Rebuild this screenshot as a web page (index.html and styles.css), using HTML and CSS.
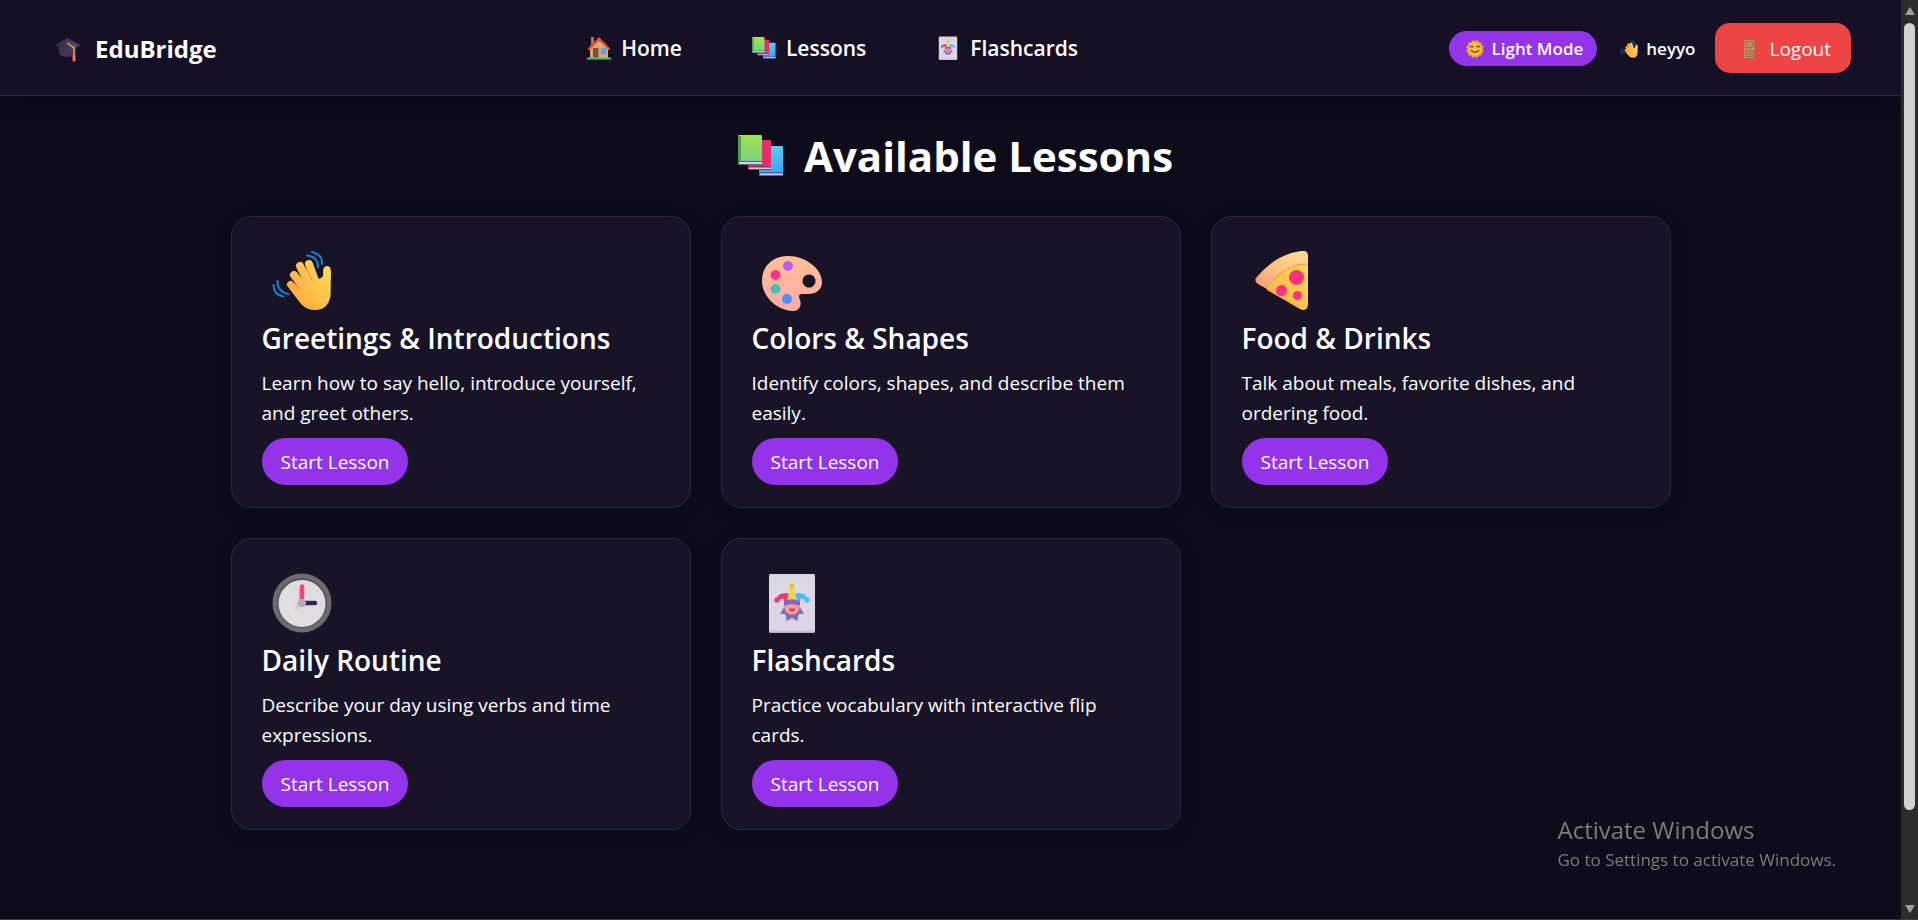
FILE: index.html
```html
<!DOCTYPE html>
<html lang="en">
<head>
<meta charset="utf-8">
<title>EduBridge - Lessons</title>
<link rel="stylesheet" href="styles.css">
</head>
<body>
<svg class="sprite" aria-hidden="true">
  <defs>
    <linearGradient id="g-hand" x1="0" y1="1" x2="1" y2="0"><stop offset="0" stop-color="#ff9a55"/><stop offset=".35" stop-color="#ffb940"/><stop offset="1" stop-color="#ffdc58"/></linearGradient>
    <linearGradient id="g-finger" gradientUnits="userSpaceOnUse" x1="18" y1="38" x2="42" y2="14"><stop offset="0" stop-color="#fba94c"/><stop offset="1" stop-color="#ffd052"/></linearGradient>
    <linearGradient id="g-green" x1="0" y1="0" x2="0" y2="1"><stop offset="0" stop-color="#a5e052"/><stop offset="1" stop-color="#72d083"/></linearGradient>
    <linearGradient id="g-blue" x1="0" y1="0" x2="0" y2="1"><stop offset="0" stop-color="#55cdf5"/><stop offset="1" stop-color="#37a0f0"/></linearGradient>
    <linearGradient id="g-palette" x1="0" y1="0" x2="0" y2="1"><stop offset="0" stop-color="#ffbf96"/><stop offset="1" stop-color="#ffabaa"/></linearGradient>
    <linearGradient id="g-crust" x1="0" y1="1" x2="1" y2="0"><stop offset="0" stop-color="#e8967c"/><stop offset=".4" stop-color="#ffc080"/><stop offset="1" stop-color="#ffdc94"/></linearGradient>
    <linearGradient id="g-cheese" x1="0" y1="1" x2="1" y2="0"><stop offset="0" stop-color="#f9ae48"/><stop offset="1" stop-color="#ffdb50"/></linearGradient>
    <linearGradient id="g-card" x1="0" y1="0" x2="0" y2="1"><stop offset="0" stop-color="#d8d6da"/><stop offset=".2" stop-color="#dcd8e4"/><stop offset=".95" stop-color="#dcd4e5"/><stop offset="1" stop-color="#b9a4cb"/></linearGradient>
    <linearGradient id="g-cap" x1="0" y1="0" x2="1" y2="0"><stop offset="0" stop-color="#2d2932"/><stop offset="1" stop-color="#5a4a72"/></linearGradient>
  </defs>
  <symbol id="i-wave" viewBox="0 0 60 60">
    <g fill="none" stroke="#1c7fd0" stroke-width="2" stroke-linecap="round"><path d="M40 1q11 3 10 12M35 4.500q11 1 11 12M5.500 30q0 11 11 13M1.500 34q0 10 10 11.500"/></g>
    <g fill="none" stroke-linecap="round">
      <path stroke="url(#g-finger)" stroke-width="8" d="M37 13l8 22"/>
      <path stroke="#d98a30" stroke-width="8" d="M31 20l10 18"/>
      <path stroke="url(#g-finger)" stroke-width="8" d="M28 15l11 22"/>
      <path stroke="#d98a30" stroke-width="7" d="M25 29l10 12"/>
      <path stroke="url(#g-finger)" stroke-width="8" d="M22 24l13 16"/>
      <path stroke="#d98a30" stroke-width="6" d="M22 36l9 9"/>
      <path stroke="url(#g-finger)" stroke-width="7" d="M18.500 33.500L32 47"/>
    </g>
    <path fill="url(#g-hand)" d="M16 36l8 6q5-1 8-5 4-3 7-7l7-2 3-1q3-2 2-6 0-6 4-6 4 0 4 6l-.5 24Q56 59 43 59q-8 0-14-6z"/>
  </symbol>
  <symbol id="i-palette" viewBox="0 0 60 60">
    <path fill="url(#g-palette)" fill-rule="evenodd" d="M26 5C44 5 60 18 60 31c0 8-6 12-14 12h-6c-4 0-3 3-2 6 2 6-1 11-7 11C16 60 0 46 0 30 0 15 11 5 26 5zm21 18.500a6.500 6.500 0 1 0 .01 0z"/>
    <circle cx="26" cy="15" r="5" fill="#bc5cf5"/><circle cx="13.500" cy="24" r="5" fill="#f83290"/><circle cx="13.500" cy="38" r="5" fill="#46bdb5"/><circle cx="25" cy="48" r="5" fill="#4a90fa"/>
  </symbol>
  <symbol id="i-pizza" viewBox="0 0 60 60">
    <path fill="url(#g-cheese)" d="M12 36Q29 11 56 11v43q-1 7-8 4z"/>
    <path fill="none" stroke="#f9a850" stroke-width="2" d="M15 38l34 19.500"/>
    <path fill="url(#g-crust)" d="M4 27Q24 3 49 0q7-1 7 5v8Q31 13 15 38L6 33q-4-3-2-6z"/>
    <path fill="none" stroke="#f5a85c" stroke-width="1.500" d="M15 37.500Q31 13 56 13"/>
    <g fill="#f8327f"><circle cx="44.500" cy="26.500" r="7.500"/><circle cx="29.500" cy="39.500" r="5.500"/><circle cx="45.500" cy="44.500" r="4.500"/></g>
  </symbol>
  <symbol id="i-clock" viewBox="0 0 60 60">
    <circle cx="30" cy="30" r="29.500" fill="#6d6a70"/><circle cx="30" cy="30" r="25" fill="#57545c"/><circle cx="30" cy="30.500" r="23.500" fill="#dfdce2"/>
    <path stroke="#d3d0d8" stroke-width="5" stroke-linecap="round" d="M28 18v14l-3 3"/>
    <path stroke="#f74369" stroke-width="4.500" stroke-linecap="round" d="M30 13.500V28"/><path stroke="#342454" stroke-width="4.500" stroke-linecap="round" d="M32 30h11"/>
    <circle cx="30" cy="30" r="4" fill="#b2aeb8"/>
  </symbol>
  <symbol id="i-joker" viewBox="0 0 60 60">
    <rect x="7" y="1" width="46" height="59" rx="1.500" fill="url(#g-card)"/>
    <path fill="#806cba" d="M22 34L18 41h5l2 7 5-3 5 3 2-7h5l-4-7z"/>
    <path fill="#e93c6c" d="M14 26q2-6 10-6l3 1-2 7h-3q0-4-4-1z"/><circle cx="15" cy="27" r="2.700" fill="#e93c6c"/>
    <path fill="#4dbcf5" d="M46 26q-2-6-10-6l-3 1 2 7h3q0-4 4-1z"/><circle cx="45" cy="27" r="2.700" fill="#4dbcf5"/>
    <path fill="#f2d447" d="M28.500 15h3l3 12h-9z"/><circle cx="30" cy="13" r="2.700" fill="#edc53c"/>
    <ellipse cx="30" cy="35" rx="7.500" ry="6.500" fill="#ee9f98"/><path fill="#8565bd" d="M22 28q8-3.500 16 0v5q-8-4-16 0z"/><path fill="#e93c5c" d="M27 35.500h6q0 3-3 3t-3-3z"/>
  </symbol>
  <symbol id="i-books" viewBox="0 0 46 42">
    <rect x="21" y="11" width="24" height="30" rx="1" fill="url(#g-blue)"/><path fill="#3c69c8" d="M21 37h24v4H21z"/><path fill="#d5c5ea" d="M22 38.500h23v1.500H22z"/>
    <rect x="10" y="5" width="23" height="30" rx="1" fill="#e3306a"/><path fill="#b02764" d="M10 31h23v4H10z"/><path fill="#e5c0dc" d="M11 32.500h22V34H11z"/>
    <rect width="24" height="30" rx="1" fill="url(#g-green)"/><path fill="#4f9c55" d="M0 1h3v29H0z"/><path fill="#3d7866" d="M0 26h24v4H0z"/><path fill="#dccbed" d="M1 27h23v2H1z"/>
  </symbol>
  <symbol id="i-cap" viewBox="0 0 25 25">
    <path fill="#433063" d="M3 9h19l-2 9q-8 4-15 0z"/><path fill="url(#g-cap)" d="M12 1l13 7-13 8L0 8z"/>
    <path fill="none" stroke="#eba44a" stroke-width="1.500" d="M12 6l7 5v8"/><path stroke="#f7785a" stroke-width="3" stroke-linecap="round" d="M19 19v4"/>
  </symbol>
  <symbol id="i-house" viewBox="0 0 24 24">
    <path fill="#ac7452" d="M4 1h3v9H4z"/><path fill="#e2a477" d="M12 4l9 9v9H3v-9z"/><path fill="none" stroke="#e94f3c" stroke-width="2.200" stroke-linecap="round" stroke-linejoin="round" d="M2 13L12 2.500 22 13"/>
    <path fill="#825049" d="M6 12h5.500v10H6z"/><path fill="#37b5f3" d="M14 12h5v6h-5z"/><path fill="#39cc68" d="M0 21.500h24V23.500H0z"/>
  </symbol>
  <symbol id="i-sun" viewBox="0 0 24 24">
    <g fill="#f49a35"><rect x="3" y="3" width="18" height="18" rx="2"/><rect x="3" y="3" width="18" height="18" rx="2" transform="rotate(30 12 12)"/><rect x="3" y="3" width="18" height="18" rx="2" transform="rotate(60 12 12)"/></g>
    <circle cx="12" cy="12" r="9" fill="#fbc43e"/><path fill="none" stroke="#6b3b29" stroke-width="1.600" stroke-linecap="round" d="M5.500 9.500q2-2.500 4 0M14.500 9.500q2-2.500 4 0M7 14q5 5 10 0"/>
  </symbol>
  <symbol id="i-door" viewBox="0 0 20 20">
    <path fill="#c78763" d="M4 0h12v20H4z"/><path fill="none" stroke="#a96b4c" d="M4.500 .5h11v19h-11zM6.500 2.500h7v6h-7zM6.500 11.500h7v2h-7zM6.500 15.500h7v2h-7z"/><circle cx="14.500" cy="9.500" r="1" fill="#f9b050"/>
  </symbol>
</svg>
<div class="window">
  <div class="page">
    <header class="navbar">
      <a class="brand" href="#"><svg class="icon-lg"><use href="#i-cap"/></svg>EduBridge</a>
      <nav class="links">
        <a href="#"><svg class="icon-md"><use href="#i-house"/></svg>Home</a>
        <a href="#"><svg class="icon-md"><use href="#i-books"/></svg>Lessons</a>
        <a href="#"><svg class="icon-md"><use href="#i-joker"/></svg>Flashcards</a>
      </nav>
      <div class="account">
        <button class="theme" type="button"><svg class="icon-sm"><use href="#i-sun"/></svg>Light Mode</button>
        <span class="user"><svg class="icon-sm"><use href="#i-wave"/></svg>heyyo</span>
        <button class="logout" type="button"><svg class="icon-door"><use href="#i-door"/></svg>Logout</button>
      </div>
    </header>
    <main class="lessons">
      <h1><svg class="icon-title"><use href="#i-books"/></svg>Available Lessons</h1>
      <div class="grid">
        <article class="card"><svg class="picture"><use href="#i-wave"/></svg><h2>Greetings &amp; Introductions</h2><p>Learn how to say hello, introduce yourself, and greet others.</p><button type="button">Start Lesson</button></article>
        <article class="card"><svg class="picture"><use href="#i-palette"/></svg><h2>Colors &amp; Shapes</h2><p>Identify colors, shapes, and describe them easily.</p><button type="button">Start Lesson</button></article>
        <article class="card"><svg class="picture"><use href="#i-pizza"/></svg><h2>Food &amp; Drinks</h2><p>Talk about meals, favorite dishes, and ordering food.</p><button type="button">Start Lesson</button></article>
        <article class="card"><svg class="picture"><use href="#i-clock"/></svg><h2>Daily Routine</h2><p>Describe your day using verbs and time expressions.</p><button type="button">Start Lesson</button></article>
        <article class="card"><svg class="picture"><use href="#i-joker"/></svg><h2>Flashcards</h2><p>Practice vocabulary with interactive flip cards.</p><button type="button">Start Lesson</button></article>
      </div>
    </main>
  </div>
  <div class="scrollbar" aria-hidden="true">
    <svg class="arrow" viewBox="0 0 12 10"><path d="M6 1l5 8H1z"/></svg>
    <div class="track"><div class="thumb"></div></div>
    <svg class="arrow" viewBox="0 0 12 10"><path d="M6 9l5-8H1z"/></svg>
  </div>
</div>
<aside class="watermark"><strong>Activate Windows</strong><span>Go to Settings to activate Windows.</span></aside>
</body>
</html>
```
FILE: styles.css
```css
* { box-sizing: border-box; }
body {
  margin: 0;
  background: #0e0b1b;
  color: #fff;
  font-family: "Open Sans", "Noto Sans", sans-serif;
  font-size: 19px;
  line-height: 30px;
}
h1, h2, p { margin: 0; }
svg { display: block; flex: none; }
a { color: inherit; text-decoration: none; }
button { border: 0; color: #fff; font: inherit; cursor: pointer; }
.sprite { position: absolute; width: 0; height: 0; }
.window { display: flex; height: 100vh; border-bottom: 1px solid #3c3b40; }
.page { flex: 1; overflow: hidden; }

.navbar {
  display: flex;
  align-items: center;
  justify-content: space-between;
  padding: 23px 50px 22px 55px;
  background: #151026;
  border-bottom: 1px solid #2d273c;
  box-shadow: 0 4px 20px rgba(0, 0, 0, 0.2);
}
.brand, .links, .links a, .account, .user, .theme, .logout { display: flex; align-items: center; }
.brand { gap: 15px; padding-top: 2px; font-size: 24px; font-weight: 700; }
.links { gap: 70px; font-size: 21px; font-weight: 600; }
.links a { gap: 10px; }
.theme, .user { gap: 8px; font-size: 17px; font-weight: 600; }
.theme { padding: 3px 14px 2px 17px; border-radius: 18px; background: #9333ea; }
.user { margin: 0 20px 0 23px; padding-top: 2px; }
.logout { gap: 10px; padding: 11px 20px 9px 24px; border-radius: 15px; background: #ef4444; }
.icon-lg { width: 25px; height: 25px; }
.icon-md { width: 24px; height: 24px; }
.icon-sm { width: 18px; height: 18px; }
.icon-door { width: 20px; height: 20px; }

.lessons { max-width: 1440px; margin: 0 auto; padding-top: 30px; }
.lessons h1 {
  display: flex;
  align-items: center;
  justify-content: center;
  gap: 20px;
  margin-bottom: 30px;
  padding-left: 10px;
  font-size: 42px;
  font-weight: 700;
  line-height: 60px;
}
.icon-title { width: 46px; height: 42px; }
.grid { display: grid; grid-template-columns: repeat(3, 1fr); gap: 30px; }
.card {
  padding: 34px 30px 22px;
  background: #181327;
  border: 1px solid #2c273b;
  border-radius: 20px;
  box-shadow: 0 4px 20px rgba(0, 0, 0, 0.1);
}
.picture { width: 60px; height: 60px; margin: 0 10px 7px; }
.card h2 { margin-bottom: 10px; font-size: 28px; font-weight: 600; line-height: 40px; }
.card p { margin-bottom: 10px; }
.card button { padding: 9px 18px 8px 19px; border-radius: 24px; background: #9333ea; }

.scrollbar { display: flex; flex-direction: column; align-items: center; width: 17px; padding: 6px 0 5px; background: #2c2c2c; }
.arrow { width: 12px; height: 10px; fill: #9f9f9f; }
.track { flex: 1; padding: 7px 0; }
.thumb { width: 11px; height: 90%; border-radius: 6px; background: #d1d1d1; }

.watermark { position: fixed; right: 82px; bottom: 45px; display: flex; flex-direction: column; color: #7d7b82; font-size: 17px; }
.watermark strong { font-size: 24px; font-weight: 400; }
```
